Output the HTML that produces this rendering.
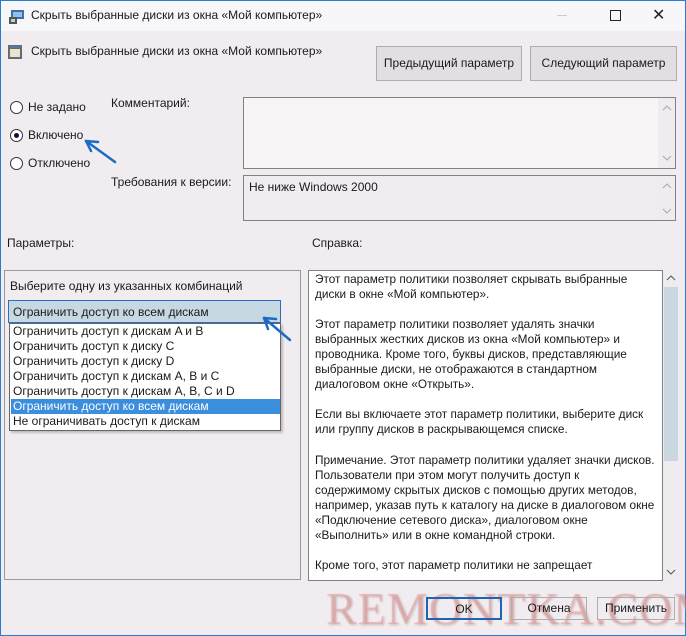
<!DOCTYPE html>
<html><head><meta charset="utf-8"><style>
*{margin:0;padding:0;box-sizing:border-box}
body{width:686px;height:636px;overflow:hidden;background:#f0ecef;font-family:"Liberation Sans",sans-serif;font-size:12px;color:#1a1a1a;position:relative}
.a{position:absolute;white-space:nowrap}
.win{position:absolute;left:0;top:0;width:686px;height:636px;border:1px solid #2b7bd0}
.title{position:absolute;left:1px;top:1px;width:684px;height:30px;background:#f7f6f8}
.btn{position:absolute;border:1px solid #adadad;background:#e1dfe2;text-align:center}
.box{position:absolute;border:1px solid #828282}
.radio{position:absolute;width:13px;height:13px;border:1px solid #333;border-radius:50%;background:#fff}
.li{position:absolute;left:11px;white-space:nowrap;height:15px;line-height:15px;width:269px;padding-left:2px}
.help{position:absolute;left:315px;top:272px;line-height:15.05px;width:346px;height:305px;overflow:hidden;font-size:11.8px}
.help p{margin-bottom:15.05px}
</style></head><body>
<div class="win"></div>
<div class="title"></div>
<svg class="a" style="left:8px;top:7px" width="18" height="18"><rect x="3" y="3" width="13" height="9" fill="#3d6fa8"/><rect x="5" y="5" width="9" height="5" fill="#8fc0ea"/><rect x="1" y="10" width="8" height="7" fill="#555"/><rect x="3" y="12" width="4" height="3" fill="#ccc"/></svg>
<div class="a" style="left:31px;top:8px">Скрыть выбранные диски из окна «Мой компьютер»</div>
<div class="a" style="left:557px;top:15px;width:10px;height:1px;background:#ccc"></div>
<div class="a" style="left:610px;top:10px;width:11px;height:11px;border:1px solid #222"></div>
<div class="a" style="left:652px;top:5px;font-size:16px;color:#222">✕</div>
<svg class="a" style="left:7px;top:44px" width="16" height="16"><rect x="1" y="1" width="14" height="14" fill="#6a6a6a"/><rect x="3" y="5" width="10" height="8" fill="#e8e4d0"/><rect x="3" y="2" width="10" height="2" fill="#4a7ab0"/></svg>
<div class="a" style="left:31px;top:44px">Скрыть выбранные диски из окна «Мой компьютер»</div>
<div class="btn" style="left:376px;top:46px;width:146px;height:35px;line-height:33px">Предыдущий параметр</div>
<div class="btn" style="left:530px;top:46px;width:147px;height:35px;line-height:33px">Следующий параметр</div>
<div class="radio" style="left:10px;top:101px"></div>
<div class="a" style="left:28px;top:100px">Не задано</div>
<div class="radio" style="left:10px;top:129px"></div>
<div class="a" style="left:14px;top:133px;width:5px;height:5px;border-radius:50%;background:#1a0a3a"></div>
<div class="a" style="left:28px;top:128px">Включено</div>
<div class="radio" style="left:10px;top:157px"></div>
<div class="a" style="left:28px;top:156px">Отключено</div>
<div class="a" style="left:111px;top:96px">Комментарий:</div>
<div class="a" style="left:111px;top:175px">Требования к версии:</div>
<div class="box" style="left:243px;top:97px;width:433px;height:72px;background:#f7f5f6"></div>
<div class="a" style="left:658px;top:98px;width:17px;height:70px;background:#eeecee"></div>
<div class="box" style="left:243px;top:175px;width:433px;height:46px"></div>
<div class="a" style="left:658px;top:176px;width:17px;height:44px;background:#eeecee"></div>
<svg class="a" style="left:0;top:0" width="686" height="636"><g stroke="#aaa" stroke-width="1" fill="none">
<path d="M663 110 L667 106 L671 110"/><path d="M663 156 L667 160 L671 156"/>
<path d="M663 188 L667 184 L671 188"/><path d="M663 209 L667 213 L671 209"/>
<path d="M266 309 L270 313 L274 309" stroke="#666"/>
<path d="M667 282 L671 278 L675 282" stroke="#555"/><path d="M667 570 L671 574 L675 570" stroke="#555"/></g></svg>
<div class="a" style="left:249px;top:180px">Не ниже Windows 2000</div>
<div class="a" style="left:7px;top:236px">Параметры:</div>
<div class="a" style="left:312px;top:236px">Справка:</div>
<div class="box" style="left:4px;top:270px;width:297px;height:310px;border-color:#9a9a9a"></div>
<div class="a" style="left:10px;top:279px">Выберите одну из указанных комбинаций</div>
<div class="a" style="left:8px;top:300px;width:273px;height:23px;background:#c6d8e2;border:1px solid #2c6cc0"></div>
<div class="a" style="left:13px;top:305px">Ограничить доступ ко всем дискам</div>
<div class="a" style="left:9px;top:323px;width:272px;height:108px;background:#fff;border:1px solid #666;box-shadow:2px 2px 2px rgba(0,0,0,.2)"></div>
<div class="li" style="top:324px">Ограничить доступ к дискам A и B</div>
<div class="li" style="top:339px">Ограничить доступ к диску C</div>
<div class="li" style="top:354px">Ограничить доступ к диску D</div>
<div class="li" style="top:369px">Ограничить доступ к дискам A, B и C</div>
<div class="li" style="top:384px">Ограничить доступ к дискам A, B, C и D</div>
<div class="li" style="top:399px;background:#3b8ede;color:#fff">Ограничить доступ ко всем дискам</div>
<div class="li" style="top:414px">Не ограничивать доступ к дискам</div>
<div class="box" style="left:308px;top:270px;width:355px;height:311px;background:#fff"></div>
<div class="a" style="left:663px;top:270px;width:16px;height:311px;background:#eeecee"></div>
<div class="a" style="left:664px;top:287px;width:14px;height:174px;background:#c8d7e0"></div>
<svg class="a" style="left:0;top:0" width="686" height="636"><g stroke="#555" stroke-width="1" fill="none"><path d="M667 280 L671 276 L675 280"/><path d="M667 570 L671 574 L675 570"/></g></svg>
<div class="help">
<p>Этот параметр политики позволяет скрывать выбранные<br>диски в окне «Мой компьютер».</p>
<p>Этот параметр политики позволяет удалять значки<br>выбранных жестких дисков из окна «Мой компьютер» и<br>проводника. Кроме того, буквы дисков, представляющие<br>выбранные диски, не отображаются в стандартном<br>диалоговом окне «Открыть».</p>
<p>Если вы включаете этот параметр политики, выберите диск<br>или группу дисков в раскрывающемся списке.</p>
<p>Примечание. Этот параметр политики удаляет значки дисков.<br>Пользователи при этом могут получить доступ к<br>содержимому скрытых дисков с помощью других методов,<br>например, указав путь к каталогу на диске в диалоговом окне<br>«Подключение сетевого диска», диалоговом окне<br>«Выполнить» или в окне командной строки.</p>
<p>Кроме того, этот параметр политики не запрещает</p>
</div>
<div class="a" style="left:326px;top:582px;font-family:'Liberation Serif',serif;font-size:46px;color:rgba(230,150,150,.45);letter-spacing:1px;text-shadow:1px 1px 2px rgba(120,60,60,.3)">REMONTKA.COM</div>
<div class="btn" style="left:426px;top:597px;width:76px;height:23px;line-height:21px;border:2px solid #1e64b4;background:transparent">OK</div>
<div class="btn" style="left:511px;top:597px;width:76px;height:23px;line-height:21px;background:transparent">Отмена</div>
<div class="btn" style="left:597px;top:597px;width:78px;height:23px;line-height:21px;background:transparent">Применить</div>
<svg class="a" style="left:0;top:0" width="686" height="636"><g stroke="#1b6bc4" stroke-width="2.5" fill="none" stroke-linecap="round"><path d="M115 162 L86 141"/><path d="M86 141 L98 142 M86 141 L91 151"/><path d="M290 340 L264 318"/><path d="M264 318 L276 319 M264 318 L268 329"/></g></svg>
</body></html>
